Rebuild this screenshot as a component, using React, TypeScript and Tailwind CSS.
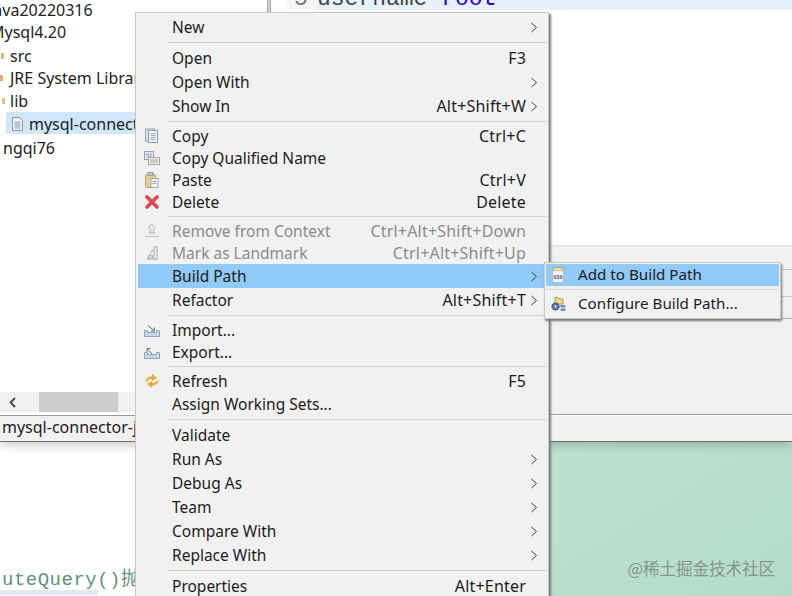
import React from "react";

const F = "[font-family:'Noto_Sans','Open_Sans',sans-serif]";

const Svg = ({ children }: { children: React.ReactNode }) => (
  <svg width="18" height="18" viewBox="0 0 18 18" fill="none">{children}</svg>
);

const CopyIcon = () => (
  <Svg>
    <rect x="2.500" y="2" width="9" height="12" fill="#d7deea" stroke="#9aa8bd" />
    <rect x="5.500" y="3.500" width="9" height="12" fill="#f4f6fa" stroke="#8e9cb4" />
    <path d="M7.500 6.500h5M7.500 8.500h5M7.500 10.500h5M7.500 12.500h5" stroke="#9aa8bd" />
  </Svg>
);
const CopyQIcon = () => (
  <Svg>
    <rect x="1.500" y="2.500" width="9" height="8" fill="#e3e8f0" stroke="#98a7bc" />
    <path d="M3 5h6M3 7h6" stroke="#98a7bc" />
    <rect x="5.500" y="8.500" width="11" height="7" fill="#f3f1e4" stroke="#98a7bc" />
    <path d="M7 11h8M7 13h8" stroke="#a89e74" />
  </Svg>
);
const PasteIcon = () => (
  <Svg>
    <rect x="2.500" y="3.500" width="10" height="13" rx="1" fill="#ecca98" stroke="#c4a06a" />
    <rect x="5" y="1.500" width="5" height="3" fill="#c0c4cb" stroke="#969aa2" />
    <rect x="8" y="7.500" width="7" height="9" fill="#f7f8fa" stroke="#98a7bc" />
    <path d="M9.500 10.500h4M9.500 12.500h4" stroke="#98a7bc" />
  </Svg>
);
const DeleteIcon = () => (
  <Svg>
    <path d="M4 4l10 10M14 4L4 14" stroke="#dc4a50" strokeWidth="3.800" strokeLinecap="round" />
  </Svg>
);
const RemoveIcon = () => (
  <Svg>
    <path d="M7 3h3l2 3-2 2 2 3H6l2-3-2-2z" fill="#ececec" stroke="#b4b4b4" />
    <path d="M2 14.500h14" stroke="#c0c0c0" />
  </Svg>
);
const MarkIcon = () => (
  <Svg>
    <path d="M11 2.500h3v13h-3z" fill="#ececec" stroke="#aeaeae" />
    <path d="M4 15l3-5 3 2v3z" fill="#d6d6d6" stroke="#aaaaaa" />
    <path d="M7 9l3-3" stroke="#aaaaaa" />
  </Svg>
);
const TrayIcon = ({ up }: { up?: boolean }) => (
  <Svg>
    <path d="M1.500 9.500h3v2h9v-2h3v6h-15z" fill="#cad6e8" stroke="#90a4c0" />
    {up ? (
      <path d="M9 11L4.500 6M4 9V5.500H7.500" stroke="#5f6e84" />
    ) : (
      <path d="M5 4.500l6 5M11.500 6.500v3.500H8" stroke="#5f6e84" />
    )}
  </Svg>
);
const RefreshIcon = () => (
  <Svg>
    <path d="M3.500 9.500C4 6.500 7 5 10.500 6" stroke="#eeb038" strokeWidth="2.400" />
    <path d="M9.500 2.500l4 3.500-4.500 2.500z" fill="#eeb038" stroke="#cf9220" strokeWidth=".5" />
    <path d="M14.500 8.500C14 11.500 11 13 7.500 12" stroke="#eeb038" strokeWidth="2.400" />
    <path d="M8.500 15.500l-4-3.500 4.500-2.500z" fill="#eeb038" stroke="#cf9220" strokeWidth=".5" />
  </Svg>
);
const JarIcon = () => (
  <Svg>
    <rect x="4" y="1.500" width="10" height="3" rx=".5" fill="#f0de98" stroke="#bca858" />
    <rect x="3.500" y="4.500" width="11" height="12" rx="1.500" fill="#f0f2f6" stroke="#b4bcca" />
    <text x="9" y="13" textAnchor="middle" fontSize="5.500" fontWeight="700" fill="#3c4a66" fontFamily="Liberation Sans">010</text>
  </Svg>
);
const ConfigIcon = () => (
  <Svg>
    <path d="M6 2.500h3l1 1.500h4v5H6z" fill="#efd98a" stroke="#b49c4a" />
    <circle cx="6.500" cy="11.500" r="3.500" fill="#5a7aa8" stroke="#34507c" strokeDasharray="1.500 .8" strokeWidth="1.400" />
    <circle cx="6.500" cy="11.500" r="1" fill="#fff" />
    <rect x="11.500" y="10" width="5" height="2.500" fill="#6f8fbb" />
    <rect x="11.500" y="13.500" width="5" height="2.500" fill="#6f8fbb" />
  </Svg>
);

const Chevron = () => (
  <svg width="8" height="11" viewBox="0 0 8 11" fill="none">
    <path d="M1.500 1l5 4.500-5 4.500" stroke="#3c3c3c" strokeWidth="1" />
  </svg>
);

type Item = {
  label?: string;
  key?: string;
  arrow?: boolean;
  icon?: React.ReactNode;
  off?: boolean;
  hot?: boolean;
  h?: number;
  sep?: boolean;
};

const items: Item[] = [
  { label: "New", arrow: true },
  { sep: true },
  { label: "Open", key: "F3" },
  { label: "Open With", arrow: true },
  { label: "Show In", key: "Alt+Shift+W", arrow: true },
  { sep: true },
  { label: "Copy", key: "Ctrl+C", icon: <CopyIcon />, h: 22 },
  { label: "Copy Qualified Name", icon: <CopyQIcon />, h: 22 },
  { label: "Paste", key: "Ctrl+V", icon: <PasteIcon />, h: 22 },
  { label: "Delete", key: "Delete", icon: <DeleteIcon />, h: 22 },
  { sep: true },
  { label: "Remove from Context", key: "Ctrl+Alt+Shift+Down", icon: <RemoveIcon />, off: true, h: 22 },
  { label: "Mark as Landmark", key: "Ctrl+Alt+Shift+Up", icon: <MarkIcon />, off: true, h: 22 },
  { label: "Build Path", arrow: true, hot: true },
  { label: "Refactor", key: "Alt+Shift+T", arrow: true },
  { sep: true },
  { label: "Import...", icon: <TrayIcon />, h: 22 },
  { label: "Export...", icon: <TrayIcon up />, h: 22 },
  { sep: true },
  { label: "Refresh", key: "F5", icon: <RefreshIcon />, h: 22 },
  { label: "Assign Working Sets..." },
  { sep: true },
  { label: "Validate" },
  { label: "Run As", arrow: true },
  { label: "Debug As", arrow: true },
  { label: "Team", arrow: true },
  { label: "Compare With", arrow: true },
  { label: "Replace With", arrow: true },
  { sep: true },
  { label: "Properties", key: "Alt+Enter" },
];

function MenuRow({ it }: { it: Item }) {
  if (it.sep)
    return (
      <div className="h-[7px] flex items-center pl-[30px]">
        <div className="h-[1px] w-full bg-[#d4d4d4]" />
      </div>
    );
  const color = it.off ? "text-[#8b8b8b]" : "text-[#1c1c1c]";
  return (
    <div
      className={`flex items-center text-[15.5px] leading-none ${color} ${it.hot ? "bg-[#91c9f7]" : ""} ${it.h === 22 ? "h-[22px]" : "h-[24px]"}`}
    >
      <div className="w-[34px] flex justify-center pr-[6px] shrink-0">{it.icon}</div>
      <div className="flex-1 whitespace-nowrap pt-[2px]">{it.label}</div>
      <div className="whitespace-nowrap text-[16px] tracking-[0.2px]">{it.key}</div>
      <div className="w-[21px] flex justify-end pr-[9px] shrink-0">{it.arrow && <Chevron />}</div>
    </div>
  );
}

function TreeRow({ children, cls }: { children: React.ReactNode; cls: string }) {
  return <div className={`flex items-center whitespace-nowrap ${cls}`}>{children}</div>;
}

const Bud = ({ c }: { c: string }) => <span className={`block w-[3px] h-[6px] mr-[5px] ${c}`} />;

export default function App() {
  return (
    <div className={`relative w-[792px] h-[596px] overflow-hidden bg-white flex flex-col ${F}`}>
      <div className="h-[442px] flex shrink-0 border-b border-[#6f6f6f] shadow-[0_3px_10px_rgba(0,0,0,0.22)] z-10 bg-[#f0f0f0]">
        {/* left package explorer */}
        <div className="w-[267px] shrink-0 flex flex-col bg-white text-[16px] leading-none text-[#222]">
          <div className="flex-1 flex flex-col overflow-hidden">
            <TreeRow cls="h-[22px] -mt-[1px] -ml-[11px]">Java20220316</TreeRow>
            <TreeRow cls="h-[22px] -ml-[10px]">Mysql4.20</TreeRow>
            <TreeRow cls="h-[24px] pl-[1px] pt-[1px]"><Bud c="bg-[#d8b48a]" /><span className="pl-[1px]">src</span></TreeRow>
            <TreeRow cls="h-[22px]"><Bud c="bg-[#dcae78]" /><span className="pl-[2px]">JRE System Library</span></TreeRow>
            <TreeRow cls="h-[23px] pl-[2px]"><Bud c="bg-[#e0c096]" />lib</TreeRow>
            <TreeRow cls="h-[22px] ml-[6px] bg-[#cfe6fb] pl-[4px] pt-[1px]">
              <svg width="15" height="16" viewBox="0 0 15 16" fill="none" className="mr-[4px]">
                <path d="M2.500 1.500h7l3 3v10h-10z" fill="#f4f6f9" stroke="#8795a8" />
                <path d="M4.500 6h6M4.500 8h6M4.500 10h6M4.500 12h6" stroke="#8795a8" />
              </svg>
              mysql-connector
            </TreeRow>
            <TreeRow cls="h-[26px] pl-[3px] pt-[2px]">ngqi76</TreeRow>
          </div>
          <div className="h-[20px] flex items-center bg-[#f0f0f0] mb-[3px]">
            <div className="w-[39px] pl-[8px]">
              <svg width="9" height="11" viewBox="0 0 9 11" fill="none">
                <path d="M7 1L2.500 5.500 7 10" stroke="#444" strokeWidth="1.800" />
              </svg>
            </div>
            <div className="w-[79px] h-full bg-[#cdcdcd]" />
          </div>
          <div className="h-[26px] flex items-center bg-[#f1f1f1] border-t border-[#9a9a9a] pl-[2px] pb-[3px]">
            mysql-connector-j
          </div>
        </div>
        {/* right editor area */}
        <div className="flex-1 flex flex-col min-w-0">
          <div className="h-[245px] flex shrink-0 bg-white">
            <div className="w-[4px] bg-[#d0d0d0] border-x border-[#a8a8a8]" />
            <div className="w-[15px]" />
            <div className="flex-1 flex flex-col">
              <div className="h-[10px] flex overflow-hidden font-['Liberation_Mono',monospace] text-[23px] leading-none">
                <div className="w-[31px] bg-[#f6f6f6] text-[#777] -mt-[12px] pl-[8px]">5</div>
                <div className="flex-1 bg-[#e6f1fb] -mt-[12px] text-[#444] whitespace-pre">
                  username <span className="text-[#2a00d8]">root</span>
                </div>
              </div>
            </div>
          </div>
          <div className="flex-1 flex flex-col border-t border-[#e2e2e2]">
            <div className="h-[23px] shrink-0" />
            <div className="h-[28px] shrink-0 border-y border-[#c6c6c6] flex justify-end" />
            <div className="h-[22px] shrink-0 border-b border-[#b0b0b0]" />
            <div className="flex-1 border-b border-[#9c9c9c]" />
            <div className="h-[26px] shrink-0 border-t border-white" />
          </div>
        </div>
      </div>

      <div className="flex-1 flex min-h-0">
        <div className="w-[549px] shrink-0 bg-white flex flex-col justify-end overflow-hidden">
          <div className="h-[20px] flex items-center pl-[2px] whitespace-nowrap font-['Liberation_Mono','Noto_Sans_CJK_SC',monospace] text-[19px] tracking-[0.5px] leading-none text-[#5f8f80]">
            uteQuery()抛
          </div>
          <div className="h-[5px] w-[98px] bg-[#e3e7ef]" />
          <div className="h-[1px]" />
        </div>
        <div className="flex-1 bg-gradient-to-br from-[#bfe2d0] to-[#b3dcc8] flex items-end justify-end pr-[17px] pb-[20px]">
          <span className="text-[16.5px] leading-none text-[#84968f] whitespace-nowrap font-['Noto_Sans_CJK_SC',sans-serif]">
            @稀土掘金技术社区
          </span>
        </div>
      </div>

      {/* context menu */}
      <div className="absolute z-20 left-[135px] top-[12px] w-[414px] border border-[#c8c8c8] bg-[#f1f1f1] pl-[2px] pr-[1px] pt-[2px] shadow-[2px_2px_2px_#777]">
        {items.map((it, i) => (
          <MenuRow key={i} it={it} />
        ))}
      </div>

      {/* submenu */}
      <div className="absolute z-30 left-[544px] top-[262px] w-[237px] h-[57px] border border-[#c8c8c8] bg-[#f1f1f1] p-[1px] shadow-[1px_2px_2px_#777] text-[15.2px] leading-none text-[#1c1c1c]">
        <div className="h-[22px] flex items-center bg-[#91c9f7]">
          <div className="w-[32px] flex justify-center pr-[8px]"><JarIcon /></div>
          Add to Build Path
        </div>
        <div className="h-[6px] flex items-center">
          <div className="h-[1px] w-full bg-[#d6d6d6]" />
        </div>
        <div className="h-[24px] flex items-center">
          <div className="w-[32px] flex justify-center pr-[8px]"><ConfigIcon /></div>
          Configure Build Path...
        </div>
      </div>
    </div>
  );
}
